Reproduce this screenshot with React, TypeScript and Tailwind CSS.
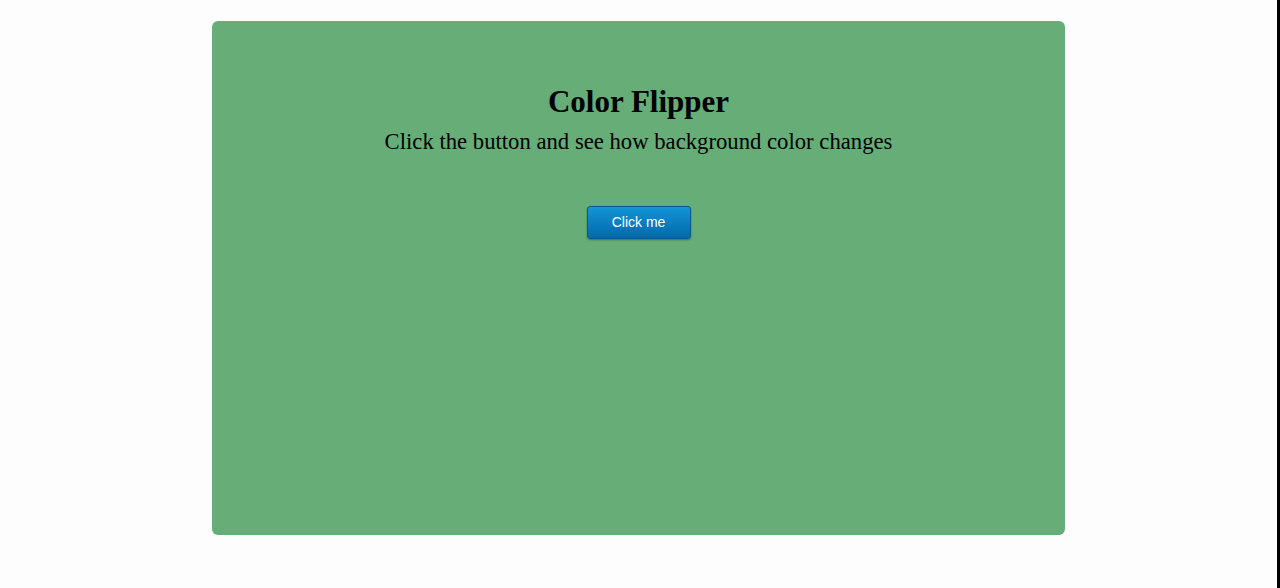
export default function App() {
  return (
    <div className="flex h-[588px] w-full border-r-[3px] border-black bg-[#fdfdfe]">
      <main className="flex-1 pt-[21px]">
        <section className="mx-auto flex h-[514px] w-[853px] flex-col items-center rounded-[6px] bg-[#66ad77] pt-[63px] font-['Liberation_Serif',serif] text-black">
          <h1 className="text-[31px] font-bold leading-[36px]">Color Flipper</h1>
          <p className="mt-[8px] text-[22.7px] leading-[27px]">Click the button and see how background color changes</p>
          <button
            type="button"
            className="mt-[51px] h-[33px] w-[104px] rounded-[3px] border border-[#055a8c] bg-gradient-to-b from-[#1495d6] to-[#0468ab] font-['Liberation_Sans',sans-serif] text-[14px] text-white shadow-[0_1px_2px_rgba(0,0,0,0.35)]"
          >
            Click me
          </button>
        </section>
      </main>
    </div>
  );
}
